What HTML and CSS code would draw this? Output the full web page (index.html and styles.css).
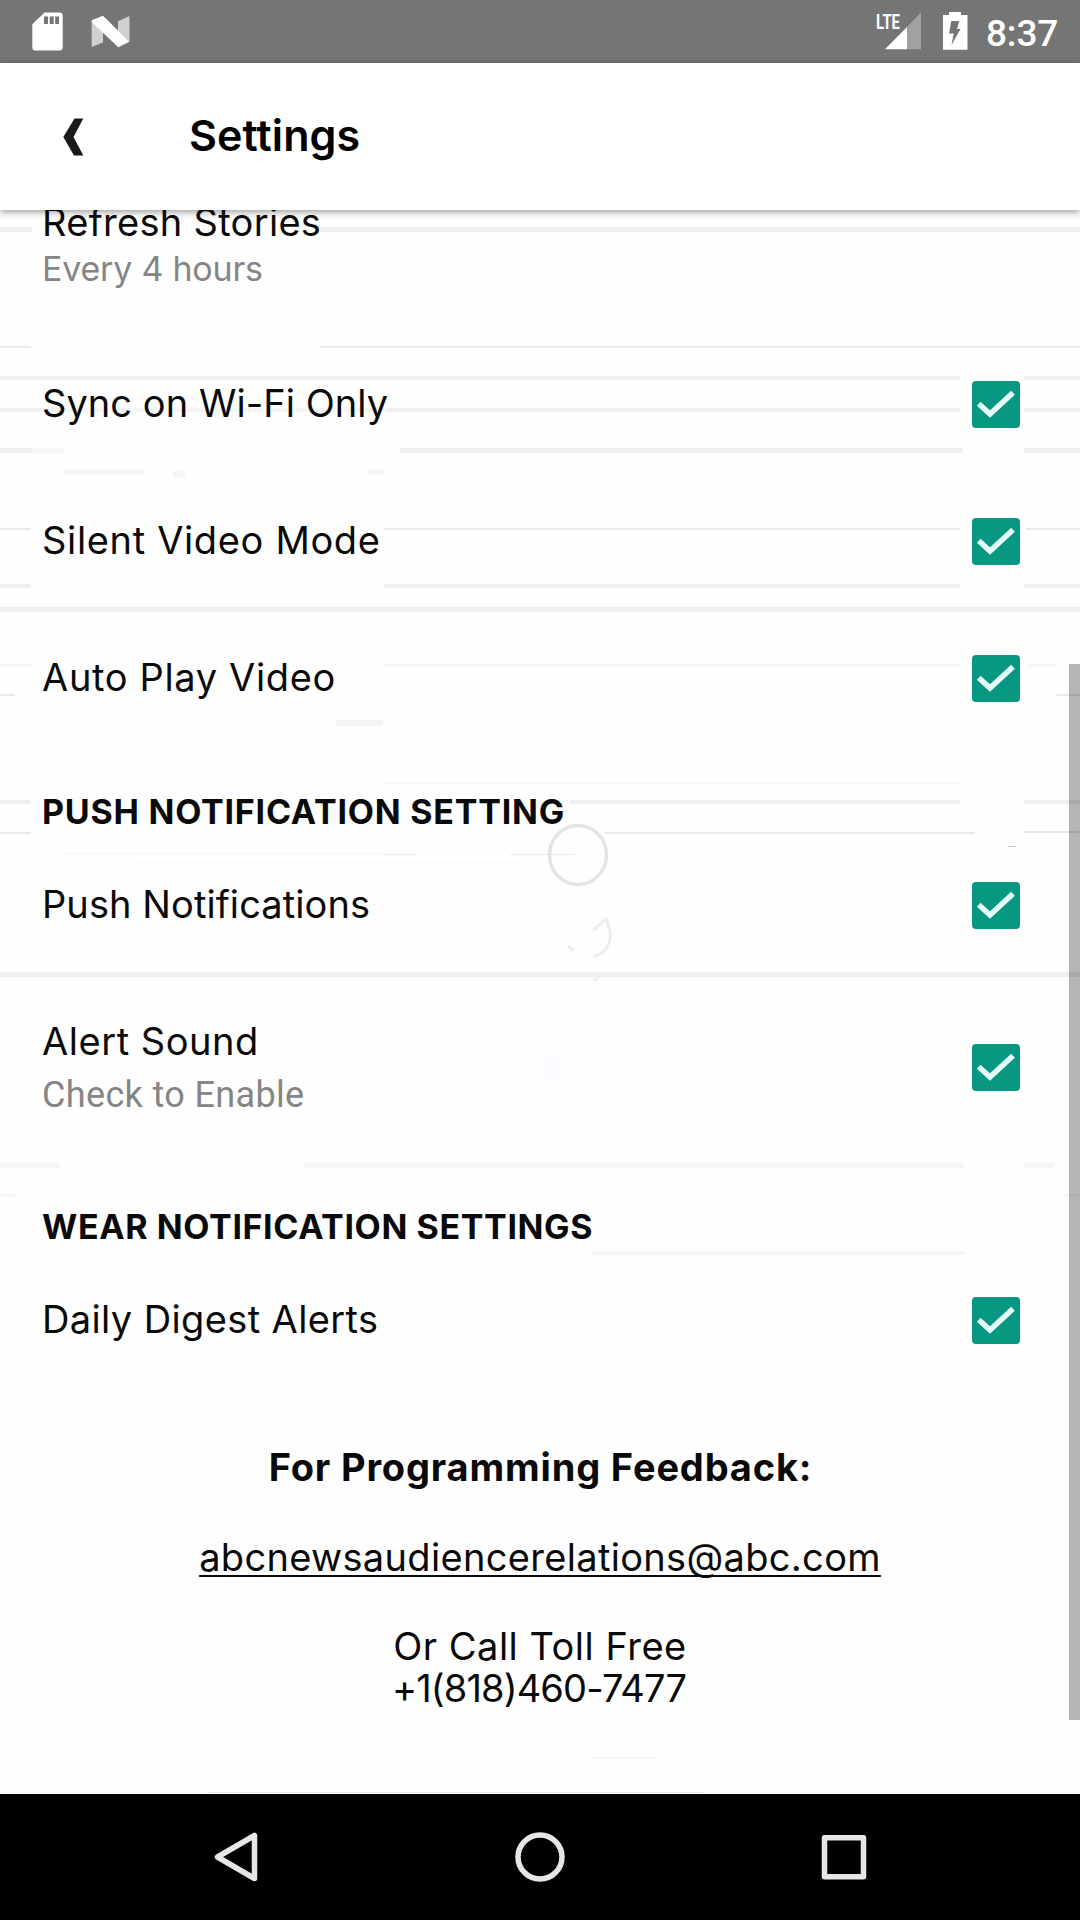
FILE: index.html
```html
<!DOCTYPE html>
<html lang="en">
<head>
<meta charset="utf-8">
<title>Settings</title>
<link rel="stylesheet" href="styles.css">
</head>
<body>
<div class="screen">
  <div class="status-bar">
    <svg class="status-left" width="140" height="63" viewBox="0 0 140 63">
      <path fill="#fff" d="M44.500 12.500H59.500q3.200 0 3.200 3.200V47.500q0 3-3 3H35.300q-3 0-3-3V24.300z"/>
      <path fill="#757575" d="M44 16.500h4v7.500h-4zM49.700 16.500h4v7.500h-4zM55.200 16.500h3.800v7.500h-3.800z"/>
      <path fill="#d0d0d0" d="M91.700 21 103 31v11.500L91.700 47zM118 21.300l11.500-5.300v26L118 31z"/>
      <path fill="#fff" d="M91.700 20.200 103 15.700 129.300 41.700 118.300 47.300 91.700 22z"/>
    </svg>
    <svg class="status-right" width="110" height="63" viewBox="870 0 110 63">
      <text class="lte" x="876" y="29" textLength="24" lengthAdjust="spacingAndGlyphs">LTE</text>
      <path fill="#a1a1a1" d="M907 27 921 12.500V49.300H907z"/>
      <path fill="#fff" d="M885 49.300 907 27V49.300z"/>
      <path fill="#fff" d="M949 12h12v3h6.500v34.700H943V15h6z"/>
      <path fill="#757575" d="M951.300 21h8l-2.300 8h3.500L951.500 45l2.200-11.500H949z"/>
    </svg>
    <span class="clock">8:37</span>
  </div>

  <header class="app-bar">
    <svg class="back" width="30" height="44" viewBox="60 115 30 44"><path fill="#191919" d="M74.500 118.500h8.800L73.500 137l9.800 18.500H74L63.300 137z"/></svg>
    <h1>Settings</h1>
  </header>

  <main class="content">
    <svg class="streaks" width="1080" height="1584" viewBox="0 210 1080 1584">
      <g class="soft" fill="#efefef">
        <path d="M0 227h32v5H0zM320 227h760v5H320z"/>
        <path d="M0 376h960v4H0zM1024 376h56v4h-56z"/>
        <path d="M0 408h43v4H0zM388 408h572v4H388zM1024 408h56v4h-56z"/>
        <path d="M0 448h32v5H0zM400 448h563v5H400zM1024 448h56v5h-56z"/>
        <path d="M0 584h31v4H0zM384 584h576v4H384zM1024 584h56v4h-56z"/>
        <path d="M0 607h1080v5H0z"/>
        <path d="M0 800h31v4H0zM570 800h390v4H570zM1024 800h56v4h-56z"/>
        <path d="M0 972h1080v5H0z"/>
      </g>
      <g fill="#e9e9e9">
        <path d="M0 346h31v2H0zM320 346h760v2H320z"/>
        <path d="M0 528h31v2H0zM384 528h576v2H384zM1026 528h54v2h-54z"/>
        <path d="M0 694h15v2H0zM1056 694h24v2h-24z"/>
        <path d="M0 832h31v2H0zM605 832h370v2H605zM1024 831h56v2h-56z"/>
        <path d="M208 1792h496v1H208z"/>
      </g>
      <g class="soft" fill="#f5f5f5">
        <path d="M43 408h345v4H43zM32 448h32v5H32zM64 469h79v6H64zM368 469h16v6h-16zM173 471h12v6h-12z"/>
        <path d="M0 664h31v3H0zM384 664h576v3H384zM1028 664h28v3h-28z"/>
        <path d="M336 720h47v6h-47zM64 853h321v1H64zM135 862h385v1H135zM384 783h576v1H384z"/>
        <path d="M0 1163h60v5H0zM304 1163h660v5H304zM1024 1163h30v5h-30zM0 1194h15v3H0zM1064 1194h16v3h-16z"/>
        <path d="M592 1251h373v4H592zM594 1757h62v2h-62z"/>
      </g>
      <path fill="#ececec" d="M384 854h32v1h-32zM510 854h65v1h-65z"/>
      <path fill="#c9c9c9" d="M1008 846h8v1h-8z"/>
      <g class="soft" fill="none">
        <ellipse cx="578" cy="855" rx="28.500" ry="29.500" stroke="#e4e4e4" stroke-width="3.500"/>
        <path stroke="#ededed" stroke-width="3" d="M594 930l12-11q10 21-3 33l-9 5M568 946l6 5M594 981l5-5"/>
      </g>
      <path fill="#fafbfe" d="M543 1057h16v23h-16z"/>
    </svg>

    <div class="row row-refresh">
      <div class="labels">
        <span class="title t-refresh">Refresh Stories</span>
        <span class="sub t-every">Every 4 hours</span>
      </div>
    </div>
    <div class="row"><span class="title t-sync">Sync on Wi-Fi Only</span>
      <svg class="check" viewBox="0 0 48 47"><rect width="48" height="47" rx="4"/><path d="M6.700 22.700 18 33 41 11.700"/></svg></div>
    <div class="row"><span class="title t-silent">Silent Video Mode</span>
      <svg class="check" viewBox="0 0 48 47"><rect width="48" height="47" rx="4"/><path d="M6.700 22.700 18 33 41 11.700"/></svg></div>
    <div class="row"><span class="title t-auto">Auto Play Video</span>
      <svg class="check" viewBox="0 0 48 47"><rect width="48" height="47" rx="4"/><path d="M6.700 22.700 18 33 41 11.700"/></svg></div>
    <h2 class="t-push-head">PUSH NOTIFICATION SETTING</h2>
    <div class="row"><span class="title t-push">Push Notifications</span>
      <svg class="check" viewBox="0 0 48 47"><rect width="48" height="47" rx="4"/><path d="M6.700 22.700 18 33 41 11.700"/></svg></div>
    <div class="row row-alert">
      <div class="labels">
        <span class="title t-alert">Alert Sound</span>
        <span class="sub sub-roboto">Check to Enable</span>
      </div>
      <svg class="check" viewBox="0 0 48 47"><rect width="48" height="47" rx="4"/><path d="M6.700 22.700 18 33 41 11.700"/></svg></div>
    <h2 class="t-wear-head">WEAR NOTIFICATION SETTINGS</h2>
    <div class="row"><span class="title t-daily">Daily Digest Alerts</span>
      <svg class="check" viewBox="0 0 48 47"><rect width="48" height="47" rx="4"/><path d="M6.700 22.700 18 33 41 11.700"/></svg></div>

    <section class="feedback">
      <h3>For Programming Feedback:</h3>
      <a class="email">abcnewsaudiencerelations@abc.com</a>
      <p class="call">Or Call Toll Free</p>
      <p class="phone">+1(818)460-7477</p>
    </section>
    <div class="scrollbar"></div>
  </main>

  <nav class="nav-bar">
    <svg width="60" height="60" viewBox="0 0 60 60"><path d="M48.500 8.500V51.500L11.500 30z"/></svg>
    <svg width="60" height="60" viewBox="0 0 60 60"><circle cx="30" cy="30" r="22"/></svg>
    <svg width="60" height="60" viewBox="0 0 60 60"><rect x="10.500" y="10.700" width="39" height="39"/></svg>
  </nav>
</div>
</body>
</html>
```
FILE: styles.css
```css
* { box-sizing: border-box; }
body { margin: 0; background: #fefefe; color: #0a0a0a; font-family: Inter, "Open Sans", sans-serif; }
h1, h2, h3, p { margin: 0; }
svg { display: block; flex: none; }

.screen { width: 1080px; height: 1920px; display: flex; flex-direction: column; overflow: hidden; }

.status-bar { height: 63px; flex: none; background: #757575; display: flex; align-items: center; }
.status-right { margin-left: auto; }
.clock { width: 100px; padding-left: 6px; margin-top: 4px; font: 500 37px/44px Roboto, sans-serif; color: #fff; letter-spacing: -0.2px; }
.lte { font: 700 21px Roboto, sans-serif; fill: #fff; }

.app-bar { height: 147px; flex: none; display: flex; align-items: center; padding-left: 60px; background: #fff; position: relative; z-index: 1; box-shadow: 0 2px 7px rgba(0, 0, 0, .4); }
.app-bar h1 { margin-left: 99px; padding-bottom: 4px; font-size: 43px; font-weight: 600; line-height: 50px; letter-spacing: .1px; color: #000; }

.content { flex: 1; min-height: 0; overflow: hidden; position: relative; padding-left: 42px; background: #fefefe; }
.streaks { position: absolute; left: 0; top: 0; }
.soft { filter: blur(.7px); }
.row { height: 137px; display: flex; align-items: center; justify-content: space-between; padding-right: 60px; position: relative; }
.row-refresh { height: 135px; margin-top: -10px; align-items: flex-start; }
.row-alert { height: 188px; }
.labels { display: flex; flex-direction: column; }
.row-refresh .labels { gap: 3px; }
.row-alert .labels { gap: 10px; padding-top: 2px; }
.title { font-size: 38px; line-height: 44px; white-space: nowrap; }
.row > .title { padding-bottom: 1px; }
.sub { font-size: 34px; line-height: 44px; color: #858585; white-space: nowrap; }
.sub-roboto { font-family: Roboto, sans-serif; font-size: 36px; letter-spacing: .35px; }
.check { width: 48px; height: 47px; margin-top: 1px; }
.check rect { fill: #089780; }
.check path { fill: none; stroke: #e6fffb; stroke-width: 5.5; }

h2 { height: 90px; padding-top: 46px; font-size: 34px; line-height: 40px; font-weight: 700; white-space: nowrap; position: relative; }
.t-push-head { letter-spacing: .77px; }
.t-wear-head { letter-spacing: .62px; }
.t-refresh { letter-spacing: .3px; }
.t-every { letter-spacing: -.22px; }
.t-sync { letter-spacing: .05px; }
.t-silent { letter-spacing: .66px; }
.t-auto { letter-spacing: .66px; }
.t-push { letter-spacing: .08px; }
.t-alert { letter-spacing: .54px; }
.t-daily { letter-spacing: .38px; }

.feedback { margin: 57px 0 0 -42px; display: flex; flex-direction: column; align-items: center; font-size: 38px; position: relative; }
.feedback h3 { font-size: 38px; line-height: 44px; font-weight: 700; letter-spacing: .84px; padding-left: 1px; }
.email { margin-top: 46px; line-height: 44px; letter-spacing: .33px; text-decoration: underline; text-decoration-thickness: 2px; text-underline-offset: 4px; text-decoration-skip-ink: none; }
.call { margin-top: 46px; line-height: 42px; letter-spacing: .5px; }
.phone { line-height: 42px; letter-spacing: -.86px; padding-right: 2px; }

.scrollbar { position: absolute; right: 0; top: 454px; width: 11px; height: 1056px; background: rgba(0, 0, 0, .285); }

.nav-bar { height: 126px; flex: none; background: #000; display: flex; align-items: center; justify-content: center; gap: 244px; }
.nav-bar svg { fill: none; stroke: #e6e6e6; stroke-width: 5.5; stroke-linejoin: round; }
```
